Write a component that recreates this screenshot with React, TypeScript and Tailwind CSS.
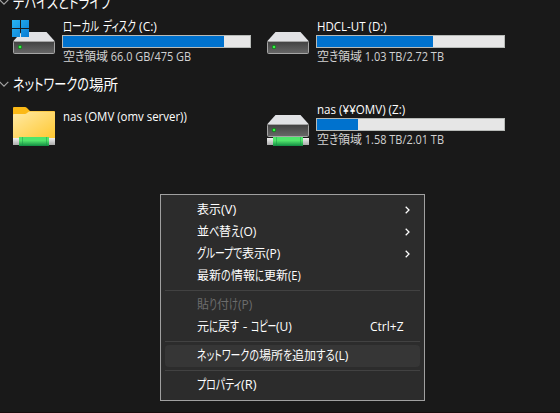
import { useLayoutEffect, useRef } from "react";

const KANA_ONLY = /^[\u3040-\u30ff]+$/;

/** A run of text condensed or stretched to the width of its box. */
function Run({ w, children }: { w: string; children: string }) {
  const box = useRef<HTMLSpanElement>(null);
  const ink = useRef<HTMLSpanElement>(null);
  useLayoutEffect(() => {
    if (!box.current || !ink.current) return;
    const scale = box.current.clientWidth / ink.current.offsetWidth;
    ink.current.style.transform = `scaleX(${scale})`;
  }, []);
  return (
    <span ref={box} className={`flex shrink-0 items-baseline ${w}`}>
      <span ref={ink} className={`origin-left shrink-0 whitespace-pre ${KANA_ONLY.test(children) ? "text-[1.09em]" : ""}`}>{children}</span>
    </span>
  );
}

type Part = [text: string, width: string];

function Label({ parts, className = "" }: { parts: Part[]; className?: string }) {
  return (
    <span className={`flex items-baseline whitespace-nowrap ${className}`}>
      {parts.map(([text, width], i) => (
        <Run key={i} w={width}>{text}</Run>
      ))}
    </span>
  );
}

function Cable() {
  return (
    <g>
      <rect x="0" y="31" width="42" height="7" fill="url(#plug)" />
      <rect x="6" y="30" width="30" height="9" fill="url(#cable)" />
      <path d="M9.5 30v9M33.5 30v9" stroke="#159447" strokeWidth="1" opacity=".45" />
    </g>
  );
}

function Drive({ windows = false, network = false }: { windows?: boolean; network?: boolean }) {
  return (
    <svg width="42" height="42" viewBox="0 0 42 42" className="shrink-0 overflow-visible">
      <path d="M8.5 8h25L42 17.5H0Z" fill="#e1e2e5" />
      <rect x=".5" y="17.5" width="41" height="12" rx="1" fill="url(#drive)" stroke="#a5a5a5" />
      <circle cx="7" cy="23" r="2.2" fill="#167c20" />
      <circle cx="7" cy="23" r="1.3" fill="#38ef45" />
      {windows && <path d="M-1-4h8v8h-8zM8-4h8v8H8zM-1 5h8v8h-8zM8 5h8v8H8z" fill="url(#win)" />}
      {network && <Cable />}
    </svg>
  );
}

function Folder() {
  return (
    <svg width="42" height="42" viewBox="0 0 42 42" className="shrink-0 overflow-visible">
      <path d="M0 1Q0 0 1 0h11q1 0 2 1l3 3h24q1 0 1 1v8H0Z" fill="#fbb916" />
      <path d="M0 8q0-1 1-1h11q1 0 2-1l2-1.500h25q1 0 1 1V31H0Z" fill="url(#folder)" />
      <Cable />
    </svg>
  );
}

function Defs() {
  return (
    <svg width="0" height="0" className="absolute">
      <defs>
        <linearGradient id="drive" x2="0" y2="1"><stop stopColor="#414141" /><stop offset="1" stopColor="#686868" /></linearGradient>
        <linearGradient id="win" x2="1" y2="1"><stop stopColor="#28b5f3" /><stop offset="1" stopColor="#087bd3" /></linearGradient>
        <linearGradient id="folder" x2="1" y2="1"><stop stopColor="#ffeaa5" /><stop offset="1" stopColor="#ffc832" /></linearGradient>
        <linearGradient id="plug" x2="0" y2="1"><stop stopColor="#f2f2f2" /><stop offset="1" stopColor="#aaa" /></linearGradient>
        <linearGradient id="cable" x2="0" y2="1"><stop stopColor="#4ce56c" /><stop offset=".4" stopColor="#53e56c" /><stop offset="1" stopColor="#118b42" /></linearGradient>
      </defs>
    </svg>
  );
}

function Section({ parts, className }: { parts: Part[]; className: string }) {
  return (
    <div className={`flex items-center gap-[4px] text-[14.5px] leading-5 ${className}`}>
      <svg width="9" height="6" viewBox="0 0 9 6" fill="none" className="shrink-0">
        <path d="M-.3.8 4 5.100 8.300.8" stroke="#a6a6a6" strokeWidth="1.100" />
      </svg>
      <Label parts={parts} />
    </div>
  );
}

function Capacity({ name, fill, usage }: { name: Part[]; fill: string; usage: string }) {
  return (
    <div className="w-[189px] shrink-0">
      <Label parts={name} className="h-[17px] pl-px leading-[17px]" />
      <div className="h-[13px] border border-[#b7bab7] bg-[#e6e6e6]">
        <div className={`h-full bg-[#0072ce] ${fill}`} />
      </div>
      <Label
        parts={[["空", "w-[12px]"], ["き", "w-[9px]"], ["領域", "w-[24px]"], [usage, usage.includes("GB") ? "w-[83px]" : "w-[82px]"]]}
        className="h-[17px] pl-px leading-[17px] text-[#d2d2d2]"
      />
    </div>
  );
}

function Item({ parts, submenu, shortcut, className = "" }: { parts: Part[]; submenu?: boolean; shortcut?: boolean; className?: string }) {
  return (
    <div className={`flex h-[22px] items-center justify-between rounded-[4px] pl-8 ${className}`}>
      <Label parts={parts} />
      {submenu && (
        <svg width="5" height="8" viewBox="0 0 5 8" fill="none" className="mr-[10px]">
          <path d="m.7.7 3.300 3.300L.7 7.300" stroke="#fff" strokeWidth="1.250" />
        </svg>
      )}
      {shortcut && <Label parts={[["Ctrl+Z", "w-[34px]"]]} className="mr-4" />}
    </div>
  );
}

function Separator({ className }: { className: string }) {
  return <div className={`h-px bg-[#424242] ${className}`} />;
}

export default function App() {
  return (
    <div className="relative h-[413px] w-[560px] overflow-hidden border-b border-[#170d0d] bg-[#191919] font-['Open_Sans','Noto_Sans_CJK_JP',sans-serif] text-[12px] text-white [font-feature-settings:'palt']">
      <Defs />
      <Section className="-mt-2 h-5" parts={[["デバイスとドライブ", "w-[98px]"]]} />
      <div className="flex h-[61px] pl-[13px] pt-[6px]">
        <div className="mt-[6px]"><Drive windows /></div>
        <div className="ml-[7px]">
          <Capacity fill="w-[161px]" usage=" 66.0 GB/475 GB" name={[["ローカル", "w-[36px]"], [" ", "w-[4px]"], ["ディスク", "w-[33px]"], [" (C:)", "w-[21px]"]]} />
        </div>
        <div className="ml-[16px] mt-[6px]"><Drive /></div>
        <div className="ml-[7px]">
          <Capacity fill="w-[116px]" usage=" 1.03 TB/2.72 TB" name={[["HDCL-UT (D:)", "w-[70px]"]]} />
        </div>
      </div>
      <Section className="mt-[1px] h-5" parts={[["ネットワークの", "w-[76px]"], ["場所", "w-[29px]"]]} />
      <div className="flex h-[54px] pl-[13px] pt-[7px]">
        <div className="mt-[6px]"><Folder /></div>
        <div className="ml-[7px] mt-[7px] w-[189px]">
          <Label parts={[["nas (OMV (omv server))", "w-[124px]"]]} className="pl-px leading-[17px]" />
        </div>
        <div className="ml-[16px] mt-[6px]"><Drive network /></div>
        <div className="ml-[7px]">
          <Capacity fill="w-[41px]" usage=" 1.58 TB/2.01 TB" name={[["nas (¥¥OMV) (Z:)", "w-[88px]"]]} />
        </div>
      </div>

      <div className="absolute left-[160px] top-[194px] h-[207px] w-[265px] border border-[#a0a0a0] bg-[#2c2c2c] px-1 pt-1">
        <Item submenu parts={[["表示", "w-[24px]"], ["(V)", "w-[15px]"]]} />
        <Item submenu parts={[["並", "w-[12px]"], ["べ", "w-[10px]"], ["替", "w-[12px]"], ["え", "w-[9px]"], ["(O)", "w-[16px]"]]} />
        <Item submenu parts={[["グループで", "w-[45px]"], ["表示", "w-[24px]"], ["(P)", "w-[14px]"]]} />
        <Item parts={[["最新", "w-[24px]"], ["の", "w-[10px]"], ["情報", "w-[24px]"], ["に", "w-[9px]"], ["更新", "w-[24px]"], ["(E)", "w-[13px]"]]} />
        <Separator className="mb-[3px] mt-[3px]" />
        <Item className="text-[#6d6d6d]" parts={[["貼", "w-[12px]"], ["り", "w-[8px]"], ["付", "w-[12px]"], ["け", "w-[9px]"], ["(P)", "w-[14px]"]]} />
        <Item shortcut parts={[["元", "w-[12px]"], ["に", "w-[9px]"], ["戻", "w-[12px]"], ["す", "w-[9px]"], [" - ", "w-[12px]"], ["コピー", "w-[25px]"], ["(U)", "w-[16px]"]]} />
        <Separator className="my-[3px]" />
        <Item className="bg-[#363636]" parts={[["ネットワークの", "w-[62px]"], ["場所", "w-[24px]"], ["を", "w-[9px]"], ["追加", "w-[24px]"], ["する", "w-[19px]"], ["(L)", "w-[13px]"]]} />
        <Separator className="my-[3px]" />
        <Item parts={[["プロパティ", "w-[44px]"], ["(R)", "w-[15px]"]]} />
      </div>
    </div>
  );
}
